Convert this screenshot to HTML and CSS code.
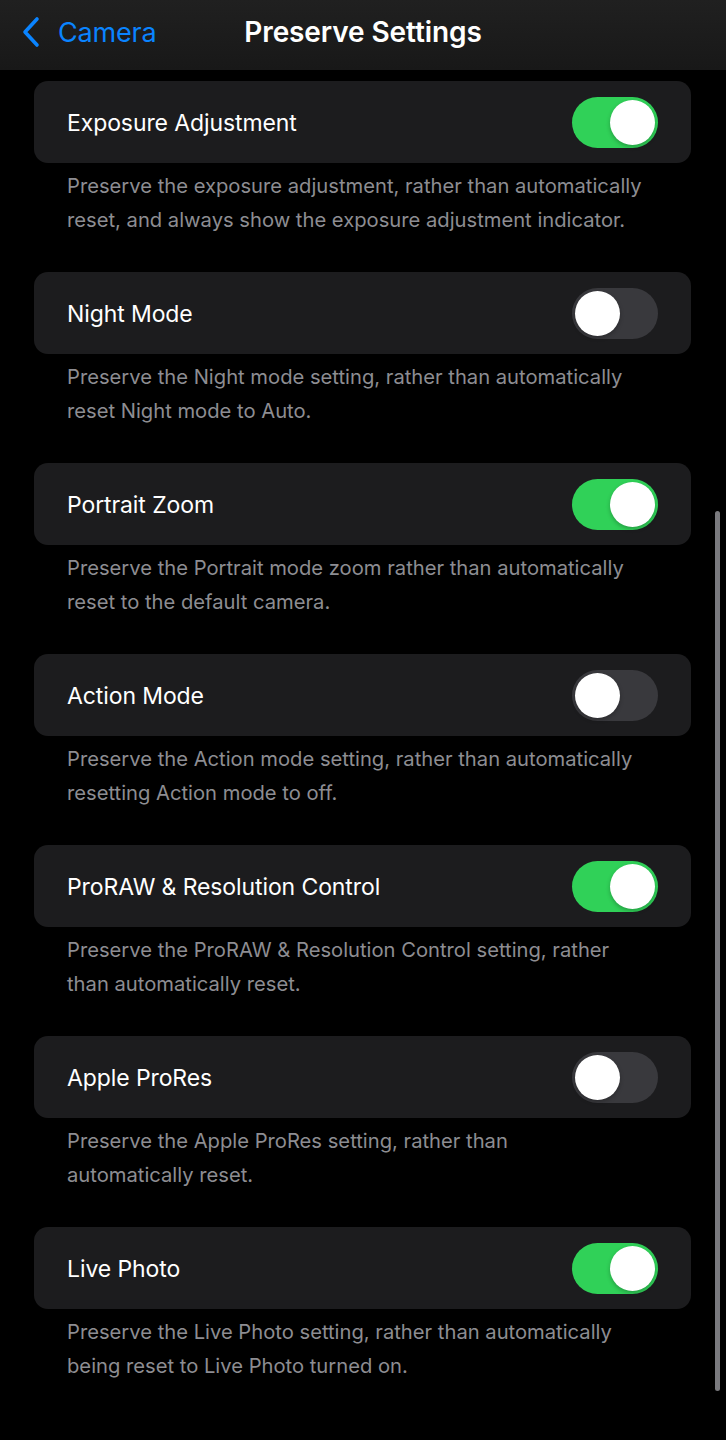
FILE: index.html
```html
<!DOCTYPE html>
<html lang="en">
<head>
    <meta charset="UTF-8">
    <meta name="viewport" content="width=device-width, initial-scale=1.0">
    <title>Preserve Settings</title>
    <link rel="stylesheet" href="styles.css">
</head>
<body>
    <header class="nav-bar">
        <a class="back-link" href="#">
            <svg class="back-icon" viewBox="0 0 20 32" width="20" height="32" aria-hidden="true">
                <path d="M16 3 L4 16 L16 29" fill="none" stroke="currentColor" stroke-width="3.6" stroke-linecap="round" stroke-linejoin="round"/>
            </svg>
            <span>Camera</span>
        </a>
        <h1 class="nav-title">Preserve Settings</h1>
    </header>

    <main class="settings">
        <section class="setting">
            <div class="setting-row">
                <span class="setting-label">Exposure Adjustment</span>
                <span class="toggle is-on"><span class="knob"></span></span>
            </div>
            <p class="setting-note">Preserve the exposure adjustment, rather than automatically<br>reset, and always show the exposure adjustment indicator.</p>
        </section>

        <section class="setting">
            <div class="setting-row">
                <span class="setting-label">Night Mode</span>
                <span class="toggle"><span class="knob"></span></span>
            </div>
            <p class="setting-note">Preserve the Night mode setting, rather than automatically<br>reset Night mode to Auto.</p>
        </section>

        <section class="setting">
            <div class="setting-row">
                <span class="setting-label">Portrait Zoom</span>
                <span class="toggle is-on"><span class="knob"></span></span>
            </div>
            <p class="setting-note">Preserve the Portrait mode zoom rather than automatically<br>reset to the default camera.</p>
        </section>

        <section class="setting">
            <div class="setting-row">
                <span class="setting-label">Action Mode</span>
                <span class="toggle"><span class="knob"></span></span>
            </div>
            <p class="setting-note">Preserve the Action mode setting, rather than automatically<br>resetting Action mode to off.</p>
        </section>

        <section class="setting">
            <div class="setting-row">
                <span class="setting-label">ProRAW &amp; Resolution Control</span>
                <span class="toggle is-on"><span class="knob"></span></span>
            </div>
            <p class="setting-note">Preserve the ProRAW &amp; Resolution Control setting, rather<br>than automatically reset.</p>
        </section>

        <section class="setting">
            <div class="setting-row">
                <span class="setting-label">Apple ProRes</span>
                <span class="toggle"><span class="knob"></span></span>
            </div>
            <p class="setting-note">Preserve the Apple ProRes setting, rather than<br>automatically reset.</p>
        </section>

        <section class="setting">
            <div class="setting-row">
                <span class="setting-label">Live Photo</span>
                <span class="toggle is-on"><span class="knob"></span></span>
            </div>
            <p class="setting-note">Preserve the Live Photo setting, rather than automatically<br>being reset to Live Photo turned on.</p>
        </section>
    </main>

    <div class="scroll-indicator"></div>
</body>
</html>
```

FILE: styles.css
```css
:root {
    --bg: #000000;
    --card: #1c1c1e;
    --label: #ffffff;
    --note: #8d8d92;
    --blue: #0a84ff;
    --green: #30d158;
    --track-off: #39393d;
}

body {
    margin: 0;
    background: var(--bg);
    color: var(--label);
    font-family: Inter, "Noto Sans", sans-serif;
    min-height: 1440px;
}

.nav-bar {
    height: 70px;
    box-sizing: border-box;
    padding-bottom: 6px;
    display: flex;
    align-items: center;
    position: relative;
    background: linear-gradient(180deg, #202020 0%, #181818 100%);
}

.back-link {
    display: flex;
    align-items: center;
    gap: 17px;
    margin-left: 21px;
    color: var(--blue);
    text-decoration: none;
    font-size: 27px;
    letter-spacing: -0.2px;
}

.back-icon {
    display: block;
}

.nav-title {
    position: absolute;
    left: 0;
    right: 0;
    top: 0;
    bottom: 6px;
    margin: 0;
    display: flex;
    align-items: center;
    justify-content: center;
    font-size: 28px;
    font-weight: 600;
    letter-spacing: -0.1px;
    pointer-events: none;
}

.settings {
    padding: 11px 35px 0 34px;
}

.setting {
    margin-bottom: 35px;
}

.setting-row {
    height: 82px;
    display: flex;
    align-items: center;
    justify-content: space-between;
    padding: 0 34px 0 33px;
    background: var(--card);
    border-radius: 14px;
}

.setting-label {
    font-size: 23px;
    letter-spacing: -0.1px;
    padding-top: 2px;
}

.toggle {
    width: 86px;
    height: 51px;
    border-radius: 26px;
    background: var(--track-off);
    display: flex;
    align-items: center;
    padding: 0 3px;
    box-sizing: border-box;
    margin-right: -1px;
}

.toggle.is-on {
    background: var(--green);
    justify-content: flex-end;
}

.knob {
    width: 45px;
    height: 45px;
    border-radius: 50%;
    background: #ffffff;
    box-shadow: 0 2px 4px rgba(0, 0, 0, 0.25);
}

.setting-note {
    margin: 6px 0 0 33px;
    font-size: 20.2px;
    line-height: 34px;
    color: var(--note);
    white-space: nowrap;
}

.scroll-indicator {
    position: fixed;
    top: 511px;
    right: 6px;
    width: 5px;
    height: 880px;
    border-radius: 3px;
    background: #7a7a7e;
}
```
